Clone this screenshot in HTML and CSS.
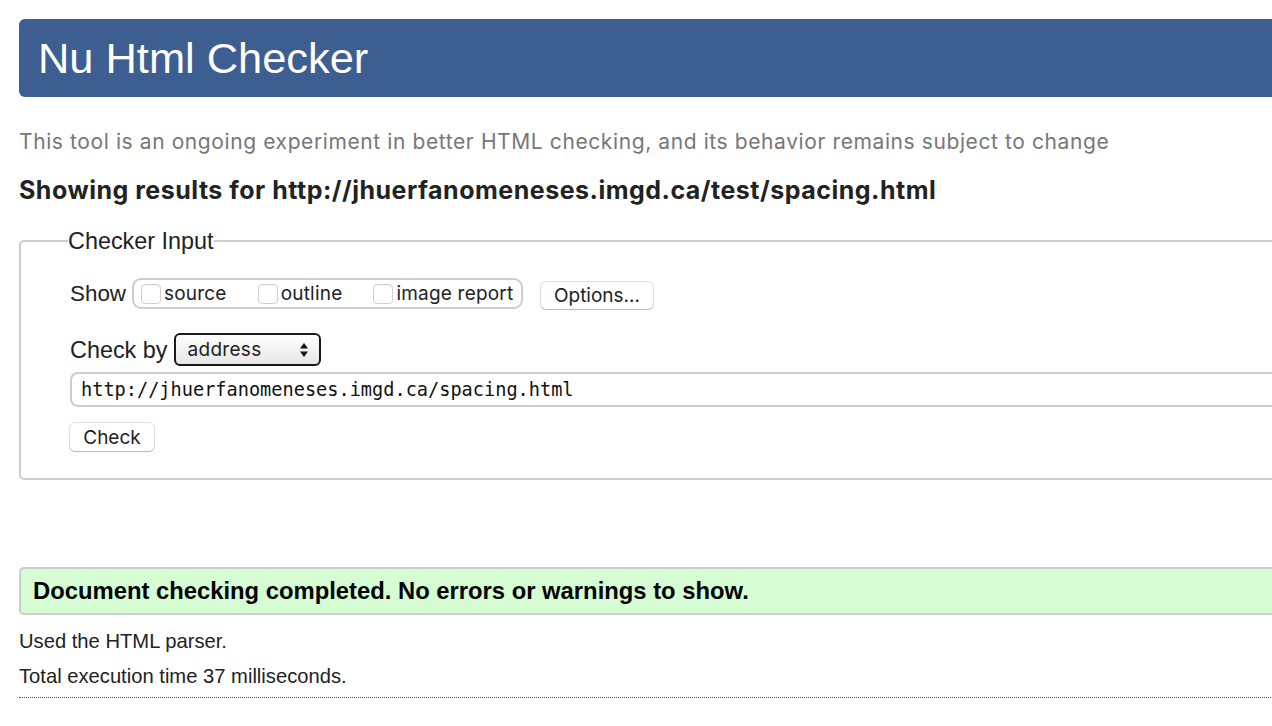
FILE: index.html
```html
<!DOCTYPE html>
<html lang="en">
<head>
<meta charset="utf-8">
<title>Nu Html Checker</title>
<link rel="stylesheet" href="styles.css">
</head>
<body>
<div class="page">
  <h1 class="masthead">Nu Html Checker</h1>
  <p class="intro">This tool is an ongoing experiment in better HTML checking, and its behavior remains subject to change</p>
  <h2 class="results-for">Showing results for http://jhuerfanomeneses.imgd.ca/test/spacing.html</h2>
  <fieldset class="checker">
    <legend class="checker-legend">Checker Input</legend>
    <div class="row show-row">
      <span class="row-label show-label">Show</span>
      <div class="checkgroup">
        <label class="opt"><span class="box"></span>source</label>
        <label class="opt"><span class="box"></span>outline</label>
        <label class="opt"><span class="box"></span>image report</label>
      </div>
      <button class="btn options-btn" type="button">Options…</button>
    </div>
    <div class="row checkby-row">
      <span class="row-label">Check by</span>
      <div class="select">
        <span class="select-text">address</span>
        <svg class="select-arrows" width="10" height="16" viewBox="0 0 10 16"><path d="M5 1 L9 6.5 H1 Z" fill="#111"/><path d="M5 15 L9 9.5 H1 Z" fill="#111"/></svg>
      </div>
    </div>
    <div class="url">http://jhuerfanomeneses.imgd.ca/spacing.html</div>
    <button class="btn check-btn" type="button">Check</button>
  </fieldset>
  <div class="success">Document checking completed. No errors or warnings to show.</div>
  <p class="meta">Used the HTML parser.</p>
  <p class="meta">Total execution time 37 milliseconds.</p>
  <div class="rule"></div>
</div>
</body>
</html>
```

FILE: styles.css
```css
html, body {
  margin: 0;
  padding: 0;
  overflow: hidden;
  background: #fff;
}
body {
  font-family: "Liberation Sans", Arial, Helvetica, sans-serif;
  color: #222;
}
.page {
  width: 1300px;
  padding: 19px 0 0 19px;
}
.masthead {
  margin: 0;
  height: 78px;
  line-height: 78px;
  padding-left: 19px;
  background: #3d5e90;
  color: #fff;
  font-size: 43.4px;
  font-weight: normal;
  border-radius: 6px 0 0 6px;
}
.intro {
  margin: 32px 0 0 0;
  font-family: Inter, "Liberation Sans", sans-serif;
  font-size: 21px;
  line-height: 26px;
  letter-spacing: 0.6px;
  color: #777;
}
.results-for {
  margin: 20px 0 0 0;
  font-family: Inter, "Liberation Sans", sans-serif;
  font-size: 25px;
  line-height: 30px;
  letter-spacing: 0.5px;
  font-weight: bold;
  color: #222;
}
.checker {
  margin: 23px 0 0 0;
  padding: 24px 0 27px 48px;
  border: 2px solid #cdcdcd;
  border-right: none;
  border-radius: 5px 0 0 5px;
  min-width: 0;
}
.checker-legend {
  padding: 0;
  margin-left: -1px;
  font-size: 23.4px;
  line-height: 26px;
  color: #222;
}
.row {
  display: flex;
  align-items: center;
  padding-left: 1px;
}
.row-label {
  font-size: 23.4px;
  line-height: 26px;
  margin-right: 6px;
}
.show-label {
  font-size: 22.4px;
  margin-right: 6px;
}
.checkgroup {
  display: flex;
  align-items: center;
  height: 31px;
  box-sizing: border-box;
  width: 391px;
  border: 2px solid #cdcdcd;
  border-radius: 9px;
  padding-left: 7px;
  gap: 31px;
}
.opt {
  display: flex;
  align-items: center;
  font-family: Inter, "Liberation Sans", sans-serif;
  font-size: 19px;
  letter-spacing: 0.2px;
  color: #222;
}
.box {
  width: 20px;
  height: 20px;
  box-sizing: border-box;
  border: 1px solid #d0d0d0;
  border-radius: 4px;
  margin-right: 3px;
  background: #fff;
  box-shadow: inset 0 1px 1px rgba(0,0,0,0.05);
}
.btn {
  font-family: Inter, "Liberation Sans", sans-serif;
  font-size: 19px;
  color: #222;
  background: #fff;
  border: none;
  border-radius: 5px;
  box-shadow: 0 0 0 1px rgba(0,0,0,0.12), 0 1px 1px rgba(0,0,0,0.18);
  padding: 0;
}
.options-btn {
  margin-left: 18px;
  width: 112px;
  height: 27px;
  margin-top: 4px;
}
.show-row {
  height: 31px;
}
.checkby-row {
  margin-top: 24px;
}
.select {
  display: flex;
  align-items: center;
  justify-content: space-between;
  box-sizing: border-box;
  width: 147px;
  height: 33px;
  border: 2px solid #1a1a1a;
  border-radius: 6px;
  background: linear-gradient(#ffffff, #e6e6e6);
  padding: 0 10px 0 12px;
}
.select-text {
  font-family: Inter, "Liberation Sans", sans-serif;
  font-size: 19px;
  letter-spacing: 0.3px;
}
.url {
  margin: 6px 0 0 1px;
  box-sizing: border-box;
  height: 35px;
  border: 2px solid #cdcdcd;
  border-right: none;
  border-radius: 8px 0 0 8px;
  padding-left: 9px;
  font-family: "DejaVu Sans Mono", "Liberation Mono", monospace;
  font-size: 18.6px;
  line-height: 31px;
  color: #111;
}
.check-btn {
  display: block;
  margin: 16px 0 0 1px;
  width: 84px;
  height: 28px;
}
.success {
  margin-top: 87px;
  box-sizing: border-box;
  height: 48px;
  line-height: 44px;
  border: 2px solid #cdcdcd;
  border-right: none;
  border-radius: 5px 0 0 5px;
  background: #d5fcd2;
  padding-left: 12px;
  font-size: 23.8px;
  font-weight: bold;
  color: #000;
}
.meta {
  margin: 15px 0 0 0;
  font-size: 20.2px;
  line-height: 22px;
  color: #222;
}
.meta + .meta {
  margin-top: 13px;
}
.rule {
  margin-top: 10px;
  border-top: 1px dotted #555;
}
```
